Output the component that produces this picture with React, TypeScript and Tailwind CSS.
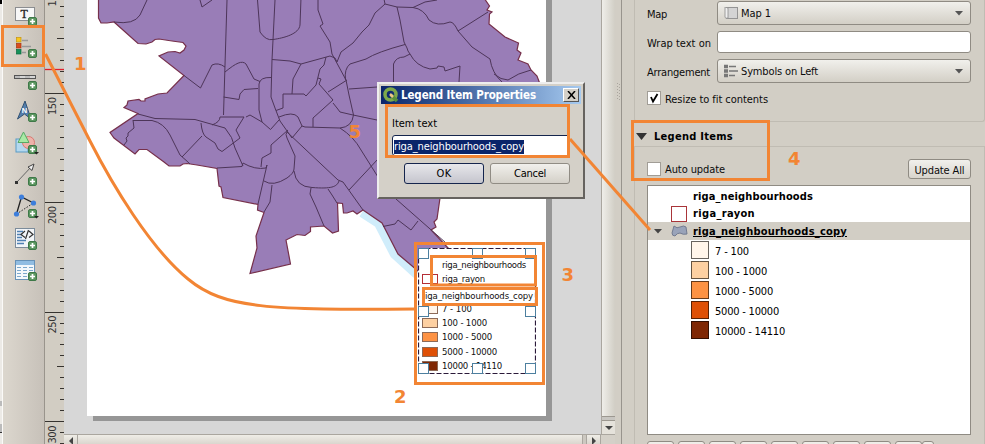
import { useLayoutEffect, useRef, type ReactNode } from 'react';

/* Text run whose tracking is adjusted so that it occupies a fixed width. */
function T({ w, children, className = '' }: { w: number; children: string; className?: string }) {
  const ref = useRef<HTMLSpanElement>(null);
  useLayoutEffect(() => {
    const el = ref.current;
    if (!el) return;
    el.style.letterSpacing = '0px';
    const natural = el.getBoundingClientRect().width;
    el.style.letterSpacing = `${(w - natural) / children.length}px`;
  }, [w, children]);
  return (
    <span ref={ref} className={`inline-block whitespace-pre ${className}`}>
      {children}
    </span>
  );
}

const classes = [
  { label: '7 - 100', w: 34, lw: 30, fill: 'bg-[#fff5eb]' },
  { label: '100 - 1000', w: 52, lw: 45, fill: 'bg-[#fdd0a2]' },
  { label: '1000 - 5000', w: 58, lw: 50, fill: 'bg-[#fd9243]' },
  { label: '5000 - 10000', w: 64, lw: 55, fill: 'bg-[#de4f05]' },
  { label: '10000 - 14110', w: 70, lw: 60, fill: 'bg-[#7f2704]' },
];

function Plus({ x, y, menu = false }: { x: number; y: number; menu?: boolean }) {
  return (
    <g>
      <rect x={x + 0.5} y={y + 0.5} width="8" height="8" rx="1.5" fill="#5b9660" stroke="#3e7848" />
      <path d={`M${x + 4.5} ${y + 2}v5M${x + 2} ${y + 4.5}h5`} stroke="#fff" strokeWidth="1.7" />
      {menu && <path d={`M${x + 6} ${y + 7}h5l-2.5 2.5z`} fill="#222" />}
    </g>
  );
}

function Tool({ children }: { children: ReactNode }) {
  return (
    <div className="h-8 w-full shrink-0">
      <svg width="41" height="32" viewBox="3 0 41 32" className="block overflow-visible">{children}</svg>
    </div>
  );
}

function Toolbar() {
  return (
    <div className="flex w-[41px] shrink-0 flex-col bg-linear-to-r from-[#dcd7ce] to-[#c7c1b9]">
      <Tool>
        <rect x="15.500" y="7.500" width="19" height="13" fill="#f7f7f7" stroke="#8b8d90" />
        <text x="20.500" y="18" fontSize="12" fontFamily="Liberation Serif, serif" fill="#222" stroke="#222" strokeWidth=".3">T</text>
        <Plus x={28} y={17} />
      </Tool>
      <Tool>
        <rect x="16.500" y="5.500" width="4.500" height="4.500" fill="#f8c71d" stroke="#c79410" strokeWidth=".7" />
        <rect x="16.500" y="11.500" width="4.500" height="4.500" fill="#dc4d1d" stroke="#a53512" strokeWidth=".7" />
        <rect x="16.500" y="17.500" width="4.500" height="4.500" fill="#17915a" stroke="#0b6b3e" strokeWidth=".7" />
        <path d="M22 8.500h6M22 14.500h9M22 20.500h4" stroke="#999" strokeWidth="1.500" />
        <Plus x={28} y={17} />
      </Tool>
      <Tool>
        <rect x="14.500" y="11.500" width="21" height="3" fill="#bbb" stroke="#555" />
        <path d="M20 13h5M30 13h5" stroke="#eee" />
        <Plus x={28} y={17} />
      </Tool>
      <Tool>
        <path d="M25 5 17.500 23l7-5 6.500 5z" fill="#537fae" stroke="#335272" />
        <text x="21.800" y="17" fontSize="7.500" fontWeight="bold" fontFamily="Liberation Sans, sans-serif" fill="#fff">N</text>
        <Plus x={28} y={17} />
      </Tool>
      <Tool>
        <rect x="16" y="11" width="12" height="13" fill="#b4d8ee" stroke="#5a9bc5" />
        <circle cx="28.500" cy="14.500" r="6" fill="#eeb3aa" stroke="#d77972" />
        <path d="M23.500 4 18 14.500h11z" fill="#a8e9a5" stroke="#57a967" />
        <Plus x={28} y={17} menu />
      </Tool>
      <Tool>
        <path d="m17 22 15-16" stroke="#666" />
        <path d="m34 4-6 3 4 3.500z" fill="#eee" stroke="#444" />
        <rect x="15" y="21" width="3" height="3" fill="#333" />
        <Plus x={28} y={17} />
      </Tool>
      <Tool>
        <path d="M16.500 22 21.500 5 33.500 11" fill="none" stroke="#222" strokeWidth="1.300" />
        <path d="m16.500 22 17-11" stroke="#222" strokeDasharray="1.500 1.500" />
        <circle cx="21.500" cy="5" r="2.600" fill="#3d7edb" />
        <circle cx="33.500" cy="11" r="2.600" fill="#3d7edb" />
        <circle cx="16.500" cy="22" r="2.600" fill="#3d7edb" />
        <Plus x={28} y={17} menu />
      </Tool>
      <Tool>
        <rect x="15.500" y="4.500" width="19" height="19" fill="#f2f5f8" stroke="#7c8c9b" />
        <path d="M17 7.500h6M17 10.500h5M17 13.500h5M17 16.500h9M17 19.500h7" stroke="#4f81b3" strokeWidth="1.400" />
        <path d="m25 7-4 3.500 4 3M29 7l4 3.500-4 3M28.500 6l-3 9" fill="none" stroke="#333" strokeWidth="1.200" />
        <Plus x={28} y={17} />
      </Tool>
      <Tool>
        <rect x="15.500" y="4.500" width="19" height="19" fill="#f4f8fb" stroke="#6792b7" />
        <path d="M16 7h18" stroke="#91bde2" strokeWidth="4" />
        <path d="M17 11.500h4M23 11.500h4M29 11.500h4M17 14.500h4M23 14.500h4M29 14.500h4M17 17.500h4M23 17.500h4M17 20.500h4M23 20.500h4" stroke="#7ba8cc" />
        <Plus x={28} y={16} />
      </Tool>
    </div>
  );
}

const rulerNumbers = [
  { n: '1', y: 6.5, w: 6 },
  { n: '150', y: 115, w: 18 },
  { n: '200', y: 224, w: 18 },
  { n: '250', y: 333.5, w: 18 },
  { n: '300', y: 443.5, w: 18 },
];

function Ruler() {
  const ticks = Array.from({ length: 41 }, (_, i) => i - 8);
  return (
    <svg width="20" height="444" viewBox="44 0 20 444" className="shrink-0 bg-[#d2cdc3]">
      <path d="M44.500 0v444" stroke="#99948c" />
      {ticks.map((i) => {
        const y = Math.round(93 + i * 10.93) + 0.5;
        const x = i % 10 === 0 ? 45 : i % 5 === 0 ? 57 : 60;
        return <path key={i} d={`M${x} ${y}H64`} stroke="#36332f" />;
      })}
      <path d="M45 69.500h19" stroke="#e0202c" strokeWidth="1.300" />
      <g fontFamily="DejaVu Sans Condensed, DejaVu Sans, sans-serif" fontSize="11" fill="#333">
        {rulerNumbers.map(({ n, y, w }) => (
          <text key={n} transform={`translate(56 ${y}) rotate(-90)`} textLength={w}>{n}</text>
        ))}
      </g>
    </svg>
  );
}

const outline =
  'M98.500-2V18L101 23 107 23 114 22 138 43.500 146 44 152 42 155 39.500 159 39 172 41 183 42.500 186 46 184 50 180 53 175 51.500 168 52 159 56 184 75.500 167 93 158 94 145 99 145 101 141 101 139 99.500 128 101 127 105 124 107.500 138 113.500 110 132.500 114 138 135 154 139 149.500 147 149.500 164 162 169 166 180 166 183 164 187 163.500 197 165 217 168.500 219 186 221 187 223 197.500 258 204.500 257.500 210 264 212.500 256 236 257 248 250 273.500 290.500 264 286 240 297 234.500 305 235.500 310.500 231.500 310.500 227 324 226 332.500 233 338.500 231 337.500 203 342.500 203.500 343.500 213 347 213 353 211 357 214 363 210 382 223 398 254 418 271 449 249 431 230 436 227 434 222 437 219 440 198 500 150 540 84 537 76 531 70 528 64 518 60 521 53 517 50 518.500 43 505 37 489 24 489.500 14 492 12 487 10 489.500 6 484-2Z';

const borders = [
  'M147 0 140 15Q134 25 114 22', 'M200 0 202 7 212 0', 'M227 0 225 65 223.500 115',
  'M184 75.500 200.500 88 212 65Q218 62 225 67', 'M225 72C236 63 242 60 246 64L254 79 260 81.500',
  'M223.500 97 239 99.500 240 94 244 89.500 258 88.500', 'M257.500 0 260 32Q266 41 273 39.500C284 38 299 34 300 25L301-2',
  'M275 0 272 60 271 97 275 108 280 121 292 138', 'M271 77.500Q260 77 259 84V110L262 122',
  'M138 114 155 118.500 195 119.500 225 128Q233 137 235 148L243 166', 'M133 120.500H152Q164 123 170 135L180 155Q187 161 190 164',
  'M133 120 134 128 128 133 128 136 126 138 127 141 124 145', 'M212 125Q220 122 220 117L244 117 236 130 240 138 222 151.500 218 149 215 143 206 137Q202 134 201 123',
  'M246 117 250 115 262 122 270.500 129.500 279 120', 'M182 157 202 136', 'M217 168 242 166.500 243 163Q255 170 266 168L267 165 258 204',
  'M264 181Q273 187 287 178 294 173 294 169L295 156 287 138Q285 134 287 132', 'M272 185 270 202 264 212',
  'M288 130 271 145V153L262 158 261 167', 'M318 0V10L323 24 320 26 330 42 332 54 346 80 349 95 353.500 115Q352 127 340 128L305 127 302 126 292 138',
  'M384-1 385 4 375 13 369 25 362 32 353 43 341 52 337 62', 'M385 4 397 7 413 7.500Q424 9 429 20 437 27 450 22 454 22 458 31L472 47 490 59Q492 73 502 82',
  'M413 7.500 425 2 437 0', 'M397 7 400 20 404 42 407 48 408 51 410 54Q416 66 430 69L437 68 438 66 444 67 445 71 460 66 459 82',
  'M405 44.500Q377 52 366 59L350 64Q344 69 345.500 80', 'M393.500 82V64Q396 57 404 57L410 54', 'M349 89 377 87', 'M377 120 353 115 340 112 337 108 333 103',
  'M272 59.500 290 61 301 64 330 56 335 58 337 62', 'M301 64 293 79 292 94', 'M276 110.500 283 108V94H292L304 94 306 96 316 85 320 69 324 65 326 57',
  'M318 78 321 79 319 84 333 100 313 118V127', 'M328 92 347 80', 'M279 117Q293 111 298 117L302 126', 'M340 128Q354 137 361 150L378 177',
  'M287 132 338 180 343 182 363 210', 'M294 171Q296 187 312 187.500C331 189 337 187 339 181', 'M311 188 310 194 316 207 324 226', 'M328 189 332 195 337 203',
  'M349 190 378 159', 'M383 226.500 395 224 398 220 411 230 418 221', 'M396 199 446 243', 'M488 12 458 31', 'M494 74Q501 80 508 80 518 73 531 70',
];

function MapDrawing() {
  return (
    <svg width="459" height="416" viewBox="87 0 459 416" className="absolute inset-0">
      <path d="M363 211 380 222 396 253 418 273" fill="none" stroke="#d0edfb" strokeWidth="13" />
      <path d={outline} fill="#997db7" stroke="#76304b" strokeWidth="1.200" />
      <g fill="none" stroke="#4d3559" strokeWidth="1">
        {borders.map((d) => <path key={d} d={d} />)}
      </g>
    </svg>
  );
}

function MapLegend() {
  return (
    <div className="absolute left-[331px] top-[248px] h-[126px] w-[118px] bg-white pl-[4px] pt-[10px] text-[9.500px] leading-[14px] text-[#111]">
      <div className="flex h-[13px] items-center pl-[20px]"><T w={84}>riga_neighbourhoods</T></div>
      <div className="flex h-[15px] items-center gap-[4px]">
        <div className="h-[10px] w-4 border border-[#b52e35]" />
        <T w={43}>riga_rayon</T>
      </div>
      <div className="flex h-4 items-center pt-[4px] pl-[3px]"><T w={108}>iga_neighbourhoods_copy</T></div>
      {classes.map((c) => (
        <div key={c.label} className="flex h-[14.200px] items-center gap-[4px]">
          <div className={`h-[10px] w-4 border border-[#8d6a57] ${c.fill}`} />
          <T w={c.lw}>{c.label}</T>
        </div>
      ))}
      <svg width="118" height="127" viewBox="0 0 118 127" className="absolute left-0 top-0">
        <rect x=".5" y=".5" width="117" height="125" fill="none" stroke="#2b1a3a" strokeDasharray="5 2" strokeWidth="1.200" />
        {[[0, 0], [54, 0], [107, 0], [0, 58], [107, 58], [0, 115], [54, 115], [107, 115]].map(([x, y]) => (
          <rect key={`${x}-${y}`} x={x + 0.5} y={y + 0.5} width="10" height="10" fill="#fff" stroke="#4c7f9f" />
        ))}
      </svg>
    </div>
  );
}

function Canvas() {
  return (
    <div className="flex w-[551px] shrink-0 flex-col">
      <div className="flex h-[434px]">
        <div className="w-[537px] overflow-hidden bg-[#d7d7d7] pl-[23px]">
          <div className="flex">
            <div className="relative h-[416px] w-[459px] shrink-0 bg-white">
              <MapDrawing />
              <MapLegend />
            </div>
            <div className="h-[416px] w-[6px] shrink-0 bg-[#969696]" />
          </div>
          <div className="ml-[6px] h-[5px] w-[459px] bg-[#969696]" />
        </div>
        <div className="flex w-[14px] flex-col border-l border-[#aaa69f] bg-linear-to-r from-[#efeee9] to-[#d1cec5]">
          <div className="h-[416px]" />
          <div className="h-[5px] border-y border-[#9c9890] bg-[#c8c6c1]" />
          <div className="flex flex-1 items-center justify-center bg-[#e5e2db]">
            <svg width="8" height="4"><path d="M0 0h8L4 4z" fill="#444" /></svg>
          </div>
        </div>
      </div>
      <div className="flex h-[10px] border-t border-[#aaa69f] bg-linear-to-b from-[#efede7] to-[#dad6ce]">
        <div className="flex w-[14px] justify-center border-r border-[#aaa69f] pt-[2px]">
          <svg width="4" height="8"><path d="M4 0v8L0 4z" fill="#444" /></svg>
        </div>
        <div className="w-[505px] border-r border-[#aaa69f]" />
        <div className="w-[4px] border-r border-[#aaa69f] bg-[#ccc8c0]" />
        <div className="flex w-[14px] justify-center border-r border-[#aaa69f] pt-[2px]">
          <svg width="4" height="8"><path d="M0 0v8L4 4z" fill="#444" /></svg>
        </div>
        <div className="w-[14px] bg-[#d4d0c8]" />
      </div>
    </div>
  );
}

function Combo({ icon, children, w }: { icon: ReactNode; children: string; w: number }) {
  return (
    <div className="flex h-6 w-[254px] items-center rounded-[3px] border border-[#8f8b83] bg-linear-to-b from-[#f1f0ec] to-[#d3cfc6] pl-[6px] pr-[7px]">
      {icon}
      <T w={w} className="ml-[3px] pt-[2px]">{children}</T>
      <svg width="8" height="5" className="ml-auto"><path d="M0 0h8L4 4.500z" fill="#555" /></svg>
    </div>
  );
}

function CheckBox({ checked = false }: { checked?: boolean }) {
  return (
    <div className="h-[14px] w-[14px] border border-[#a19d96] bg-white">
      {checked && <svg width="12" height="12"><path d="m3 5 2 4.500L9.500 2" fill="none" stroke="#000" strokeWidth="1.800" /></svg>}
    </div>
  );
}

function PropertiesPanel() {
  return (
    <div className="flex w-[364px] shrink-0 flex-col border-l border-[#98948d] bg-[#d2cec5] pl-[12px]">
      <div className="h-[122px] rounded-b-[3px] border border-t-0 border-[#c0bcb3] pl-[12px] pt-px">
        <div className="flex h-6 items-center"><div className="w-[70px] pt-[3px]"><T w={20}>Map</T></div>
          <Combo w={30} icon={
            <svg width="14" height="13"><rect x="2.500" y=".5" width="11" height="11" fill="#d4d4d4" stroke="#949494" /><path d="M1 0v10q0 2 3 1V1z" fill="#efefef" stroke="#8b8b8b" strokeWidth=".8" /></svg>
          }>Map 1</Combo>
        </div>
        <div className="mt-[6px] flex h-[22px] items-center"><div className="w-[70px] pt-[3px]"><T w={64}>Wrap text on</T></div>
          <div className="h-[22px] w-[254px] rounded-[3px] border border-[#8f8b83] bg-white" />
        </div>
        <div className="mt-[6px] flex h-6 items-center"><div className="w-[70px] pt-[3px]"><T w={63}>Arrangement</T></div>
          <Combo w={77} icon={
            <svg width="14" height="14"><path d="M0 2.500h4M0 7h4M0 11.500h4" stroke="#777" strokeWidth="3.500" /><path d="M5 2.500h7M5 7h9M5 11.500h6" stroke="#777" strokeWidth="1.500" /></svg>
          }>Symbols on Left</Combo>
        </div>
        <div className="mt-2 flex h-[14px] items-center gap-1"><CheckBox checked /><T w={103} className="pt-[3px]">Resize to fit contents</T></div>
      </div>
      <div className="flex h-6 items-center gap-[7px] pl-[2px] pt-[5px]">
        <svg width="11" height="7"><path d="M0 0h11L5.500 7z" fill="#333" /></svg>
        <T w={79} className="font-bold text-black">Legend Items</T>
      </div>
      <div className="h-[298px] border-x border-t border-[#c0bcb3] pl-[12px] pt-[12px]">
        <div className="flex h-5 w-[324px] items-center gap-1">
          <CheckBox /><T w={60} className="pt-[2px]">Auto update</T>
          <div className="ml-auto flex h-5 w-[63px] items-center justify-center rounded-[3px] border border-[#8f8b83] bg-linear-to-b from-[#f1f0ec] to-[#d8d4cc]"><T w={50} className="pt-[3px]">Update All</T></div>
        </div>
        <div className="mt-[6px] h-[250px] w-[324px] border border-[#8f8b83] bg-white text-black">
          <div className="flex h-[19px] items-center pl-[45px] pt-[2px] font-bold"><T w={120}>riga_neighbourhoods</T></div>
          <div className="flex h-[17px] items-center gap-[6px] pl-[23px] font-bold"><div className="h-4 w-4 border border-[#a93539]" /><T w={62} className="pt-px">riga_rayon</T></div>
          <div className="flex h-[18px] items-center bg-[#d2cec5] pl-[6px] font-bold">
            <svg width="8" height="5"><path d="M0 0h8L4 4.500z" fill="#444" /></svg>
            <svg width="17" height="12" className="ml-[9px]"><path d="M3 1Q6 4 9 2 13 0 15 2L16 9Q12 10 9 8 6 8 4 11 1 11 1 8z" fill="#99a3b9" stroke="#727b90" /></svg>
            <T w={154} className="ml-[5px] pt-px underline underline-offset-1">riga_neighbourhoods_copy</T>
          </div>
          <div className="pt-px pl-[43px]">
            {classes.map((c) => (
              <div key={c.label} className="flex h-5 items-start gap-[6px]"><div className={`h-[18px] w-[18px] border border-black/60 ${c.fill}`} /><T w={c.w} className="pt-px leading-5">{c.label}</T></div>
            ))}
          </div>
        </div>
        <div className="mt-[6px] flex gap-[4px] overflow-hidden">
          {[0, 1, 2, 3, 4, 5, 6, 7, 8].map((n) => <div key={n} className="h-5 w-[27px] shrink-0 rounded-[3px] border border-[#8f8b83] bg-[#efede8]" />)}
          <div className="-ml-[4px] h-5 w-[12px] rounded-[3px] border border-[#8f8b83] bg-[#efede8]" />
        </div>
      </div>
    </div>
  );
}

function Dialog() {
  return (
    <div className="absolute left-[377px] top-[82px] h-[117px] w-[208px] border-2 border-t-[#eee] border-r-[#66635f] border-b-[#66635f] border-l-[#eee] bg-[#d4d0c8] p-[2px] text-black">
      <div className="flex h-[18px] items-center bg-linear-to-r from-[#0a246a] to-[#a6caf0] pl-[2px] pr-[2px]">
        <svg width="16" height="16" viewBox="0 0 16 16"><circle cx="7.500" cy="7.500" r="5.500" fill="none" stroke="#7ea84b" strokeWidth="3.500" /><path d="m8 8 6 6" stroke="#58903c" strokeWidth="3.500" /><path d="m7 7 3 3" stroke="#edc58a" strokeWidth="2.500" /></svg>
        <T w={135} className="ml-[2px] text-[11.500px] font-bold text-white">Legend Item Properties</T>
        <div className="ml-auto flex h-[14px] w-4 items-center justify-center border border-t-white border-r-[#555] border-b-[#555] border-l-white bg-[#d4d0c8]">
          <svg width="9" height="8"><path d="m1 0 7 8M8 0 1 8" stroke="#000" strokeWidth="1.500" /></svg>
        </div>
      </div>
      <div className="pt-[13px] pl-[11px]">
        <div className="h-[14px]"><T w={45}>Item text</T></div>
        <div className="mt-[4px] flex h-[21px] w-[176px] items-center rounded-l-[3px] border border-[#15254d] bg-white pt-[3px] pl-[1px]"><T w={130} className="bg-[#0a246a] text-white leading-[14px]">riga_neighbourhoods_copy</T></div>
        <div className="mt-[7px] flex gap-[6px] pl-[12px]">
          <div className="flex h-[21px] w-20 items-center justify-center rounded-[3px] border border-[#15254d] bg-linear-to-b from-[#e7e7eb] to-[#c5c5cd]"><T w={15} className="pt-px">OK</T></div>
          <div className="flex h-[21px] w-20 items-center justify-center rounded-[3px] border border-[#908c84] bg-linear-to-b from-[#f1f0ec] to-[#d4d0c8]"><T w={32} className="pt-px">Cancel</T></div>
        </div>
      </div>
    </div>
  );
}

/* Orange call-outs drawn over the application window. */
function Annotations() {
  return (
    <svg width="985" height="444" className="pointer-events-none absolute inset-0">
      <g fill="none" stroke="#f28534" strokeWidth="3">
        <rect x="2.500" y="26.500" width="41" height="39" />
        <rect x="386.500" y="105.500" width="182" height="51" />
        <rect x="415.500" y="243.500" width="128" height="140" />
        <rect x="431.500" y="256.500" width="104" height="28.500" />
        <rect x="423.500" y="288.500" width="113" height="16" />
        <rect x="632.500" y="121.500" width="136" height="58" />
        <path d="M45.500 54 90 141C112 184 150 248 188 279 224 309 270 310 415 309" />
        <path d="M570 139 650 230" />
      </g>
      <g fill="#f28534" fontFamily="DejaVu Sans, sans-serif" fontWeight="bold" fontSize="18">
        <text x="74" y="69.500">1</text>
        <text x="394" y="403">2</text>
        <text x="561.500" y="281">3</text>
        <text x="788" y="165">4</text>
        <text x="348.500" y="138">5</text>
      </g>
    </svg>
  );
}

export default function App() {
  return (
    <div className="relative flex h-[444px] w-[985px] overflow-hidden bg-[#d2cec5] font-['DejaVu_Sans_Condensed','DejaVu_Sans',sans-serif] text-[11px] leading-[14px] text-[#0c0c0c]">
      <div className="flex w-[3px] shrink-0 flex-col border-r border-[#fbfaf8] bg-[#eceae6]">
        <div className="h-[4px] bg-black" />
        <div className="mt-[397px] h-[5px] bg-[#bbb]" />
        <div className="mt-[18px] h-[9px] border-b border-[#333] bg-[#bbb]" />
      </div>
      <Toolbar />
      <Ruler />
      <div className="flex w-[557px] shrink-0 bg-[#d2cec5]">
        <Canvas />
        <div className="flex w-[6px] items-start justify-center pt-[83px]">
          <svg width="3" height="18"><path d="M.5 0v18M2.500 1v17" stroke="#aaa69e" strokeDasharray="1 2" /></svg>
        </div>
      </div>
      <PropertiesPanel />
      <Dialog />
      <Annotations />
    </div>
  );
}
